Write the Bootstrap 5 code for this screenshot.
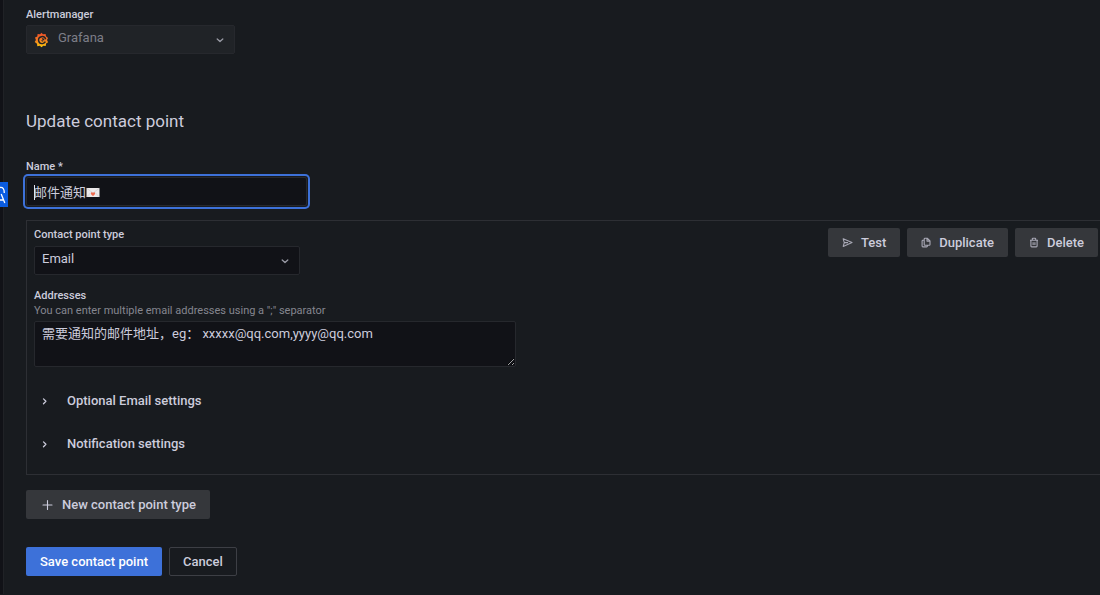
<!DOCTYPE html>
<html lang="en" data-bs-theme="dark">
<head>
<meta charset="utf-8">
<meta name="viewport" content="width=device-width, initial-scale=1">
<title>Update contact point</title>
<link href="https://cdn.jsdelivr.net/npm/bootstrap@5.3.0/dist/css/bootstrap.min.css" rel="stylesheet">
<style>
  :root { color-scheme: dark; }
  body {
    --canvas: #111217; --panel: #181b1f; --line: #26282d; --ink: #ccccdc; --muted: #85868f;
    background: var(--panel); color: var(--ink);
    font-family: Roboto, "Noto Sans CJK SC", sans-serif; font-size: 13px; line-height: 20px;
    border-left: 3px solid var(--canvas);
  }
  .page-body { border-left: 1px solid #202226; padding: 8px 0 18px 22px; }
  .field-label { display: block; font-size: 11px; font-weight: 500; line-height: 14px; margin-bottom: 3px; }
  .hint { font-size: 11px; line-height: 14px; color: var(--muted); }
  .field { height: 29px; border: 1px solid var(--line); border-radius: 2px; background-color: var(--canvas);
    color: var(--ink); font-size: 13px; line-height: 20px; padding: 3px 7px; }
  .field.form-select { padding-top: 2px; padding-bottom: 5px;
    background-image: url("data:image/svg+xml,%3Csvg xmlns='http://www.w3.org/2000/svg' viewBox='0 0 14 14' fill='none' stroke='%239a9ba6' stroke-width='1.3' stroke-linecap='round' stroke-linejoin='round'%3E%3Cpath d='M4.2 5.9 7 8.5l2.8-2.6'/%3E%3C/svg%3E");
    background-size: 14px; background-position: right 7px center; }
  .field.form-select:disabled { background-color: #202327; color: #7d7e87; padding-left: 31px; opacity: 1; }
  .am-picker { width: 209px; }
  .am-logo { position: absolute; left: 8px; top: 7px; }
  .page-title { font-size: 17px; line-height: 22px; font-weight: 400; margin: 56px 0 28px; color: var(--ink); }
  .name-wrap { width: 281px; }
  .name-wrap .field, .name-wrap .field:focus { box-shadow: 0 0 0 1px var(--panel), 0 0 0 3px #3d71d9; }
  .caret { position: absolute; left: 8px; top: 8px; width: 1px; height: 15px; background: #e4e4ee; }
  .letter { position: absolute; left: 60px; top: 10px; }
  .receiver { border: 1px solid #2d2f34; border-right: 0; padding: 7px 2px 20px 7px; margin: 14px 0 15px; }
  .type-wrap { width: 266px; }
  .type-wrap .field-label { margin-bottom: 4px; }
  .address-wrap { max-width: 482px; margin-top: 14px; }
  .address-wrap .field-label { margin-bottom: 1px; }
  .address-wrap .field { height: 46px; min-height: 46px; display: block; margin-top: 3px; padding-top: 2px; resize: vertical; }
  .tool { display: inline-flex; align-items: center; height: 29px; border-radius: 2px; border: 0;
    background: #35373b; color: var(--ink); font-size: 13px; font-weight: 500; line-height: 20px; padding: 0 14px; white-space: nowrap; }
  .tool:hover { background: #414348; color: #fff; }
  .tool-main { background: #3d71d9; color: #fff; }
  .tool-ghost { background: transparent; border: 1px solid #3d3f45; padding: 0 13px; }
  .actions { gap: 7px; }
  .fold { display: flex; align-items: center; background: none; border: 0; padding: 0; color: var(--ink);
    font-size: 13px; font-weight: 500; line-height: 20px; gap: 16px; margin-left: 2px; }
  .folds { display: grid; gap: 23px; margin-top: 24px; }
  .side-tab { position: absolute; left: 0; top: 182px; width: 8px; height: 25px; background: #0b5cdf; overflow: hidden; }
</style>
</head>
<body>
<main class="page-body">
  <div class="am-picker">
    <label class="field-label" for="am">Alertmanager</label>
    <div class="position-relative">
      <select id="am" class="form-select field" disabled><option>Grafana</option></select>
      <svg class="am-logo" width="15" height="16" viewBox="0 0 15 16" aria-hidden="true">
        <defs><linearGradient id="flame" gradientUnits="userSpaceOnUse" x1="0" y1="1" x2="0" y2="15"><stop offset="0" stop-color="#ee4e2a"/><stop offset=".5" stop-color="#f37a22"/><stop offset="1" stop-color="#fbc70c"/></linearGradient></defs>
        <path fill="url(#flame)" d="M7.500.8 9 2.300l2.600-.4.4 2.300 2 1.700-1 2 1.100 2.300-2 1.200-.4 2.500-2.400-.2-1.800 1.600-1.700-1.600-2.500.5-.3-2.400L.7 10.100l1.200-2.100L1 5.500l2.300-1L3.600 2l2.400.3z"/>
        <path d="M11.700 7.200C11 5.200 9.300 4.300 7.500 4.700 5.500 5.100 4.300 6.700 4.600 8.700c.3 1.900 2 3.100 3.900 2.900 1.300-.2 2.300-.9 2.900-2M9.700 8.300c0-1-.8-1.600-1.700-1.400" fill="none" stroke="#202327" stroke-width="1.400"/>
        <path d="M7.900 8.200c0 .6.500.9 1.200.8" fill="none" stroke="#202327" stroke-width="1.200"/>
      </svg>
    </div>
  </div>

  <h1 class="page-title">Update contact point</h1>

  <form>
    <div>
      <label class="field-label" for="name">Name *</label>
      <div class="name-wrap position-relative">
        <input id="name" type="text" class="form-control field" value="邮件通知">
        <span class="caret"></span>
        <svg class="letter" width="14" height="11" viewBox="0 0 14 11" role="img" aria-label="Love letter">
          <rect x=".5" y="1" width="13" height="9" rx=".6" fill="#ece9ea"/>
          <path d="M.8 1.300 7 6l6.200-4.700M.8 9.800 5 5.500m8.200 4.300L9 5.500" fill="none" stroke="#c9c6cb" stroke-width=".6"/>
          <path d="M7 9C4.700 7.500 4.700 6.400 5.100 5.800c.5-.7 1.500-.5 1.900.2.400-.7 1.400-.9 1.900-.2.4.6.4 1.700-1.900 3.200z" fill="#ee6b50"/>
        </svg>
      </div>
    </div>

    <section class="receiver">
      <div class="d-flex justify-content-between align-items-start">
        <div class="type-wrap">
          <label class="field-label" for="type">Contact point type</label>
          <select id="type" class="form-select field"><option>Email</option></select>
        </div>
        <div class="actions d-flex">
          <button type="button" class="tool"><svg class="me-2" width="11" height="11" viewBox="0 0 11 11" fill="none" stroke="#a9a9b6" stroke-width="1.100" stroke-linejoin="round" aria-hidden="true"><path d="M1.200 1.800 10 5.600 1.200 9.400 2.300 5.600zM2.300 5.600H6"/></svg>Test</button>
          <button type="button" class="tool"><svg class="me-2" width="10" height="11" viewBox="0 0 10 11" fill="none" stroke="#a9a9b6" stroke-width="1.100" stroke-linejoin="round" aria-hidden="true"><path d="M3.200 2q0-.8.8-.8h2.200L9 4v3.400q0 .8-.8.8H4q-.8 0-.8-.8zM6 1.300v2.800h2.900M3 3.200H1.900q-.8 0-.8.8v5.100q0 .8.8.8h3.700q.8 0 .8-.8V8.300"/></svg>Duplicate</button>
          <button type="button" class="tool"><svg class="me-2" width="10" height="11" viewBox="0 0 10 11" fill="none" stroke="#a9a9b6" stroke-width="1.100" stroke-linejoin="round" aria-hidden="true"><path d="M1 3.200h8M3.300 3.100V1.900q0-.6.6-.6h2.200q.6 0 .6.6v1.200M1.900 3.300v5.800q0 .8.8.8h4.600q.8 0 .8-.8V3.300M4.100 5.200v2.700M5.900 5.200v2.700"/></svg>Delete</button>
        </div>
      </div>

      <div class="address-wrap">
        <label class="field-label" for="addresses">Addresses</label>
        <div class="hint" id="addresses-hint">You can enter multiple email addresses using a ";" separator</div>
        <textarea id="addresses" class="form-control field" aria-describedby="addresses-hint">需要通知的邮件地址，eg： xxxxx@qq.com,yyyy@qq.com</textarea>
      </div>

      <div class="folds">
        <button type="button" class="fold" aria-expanded="false"><svg width="15" height="14" viewBox="0 0 15 14" fill="none" stroke="#ccccdc" stroke-width="1.300" stroke-linecap="round" stroke-linejoin="round" aria-hidden="true"><path d="M7.500 4.900 9.900 7.300 7.500 9.700"/></svg>Optional Email settings</button>
        <button type="button" class="fold" aria-expanded="false"><svg width="15" height="14" viewBox="0 0 15 14" fill="none" stroke="#ccccdc" stroke-width="1.300" stroke-linecap="round" stroke-linejoin="round" aria-hidden="true"><path d="M7.500 4.900 9.900 7.300 7.500 9.700"/></svg>Notification settings</button>
      </div>
    </section>

    <button type="button" class="tool"><svg class="me-2" width="14" height="14" viewBox="0 0 14 14" fill="none" stroke="#ccccdc" stroke-width="1.100" stroke-linecap="round" aria-hidden="true"><path d="M7.500 2.500v9M3 7h9"/></svg>New contact point type</button>

    <div class="actions d-flex mt-4 pt-1">
      <button type="submit" class="tool tool-main">Save contact point</button>
      <button type="button" class="tool tool-ghost">Cancel</button>
    </div>
  </form>
</main>

<div class="side-tab" aria-hidden="true">
  <svg width="8" height="25" viewBox="0 0 8 25" fill="none" stroke="#fff" stroke-width="1.300"><path d="M0 5.500C3 5 4.300 7 4.300 11M1.200 12 4.800 21M0 18h3.500"/></svg>
</div>
<script src="https://cdn.jsdelivr.net/npm/bootstrap@5.3.0/dist/js/bootstrap.bundle.min.js"></script>
</body>
</html>
